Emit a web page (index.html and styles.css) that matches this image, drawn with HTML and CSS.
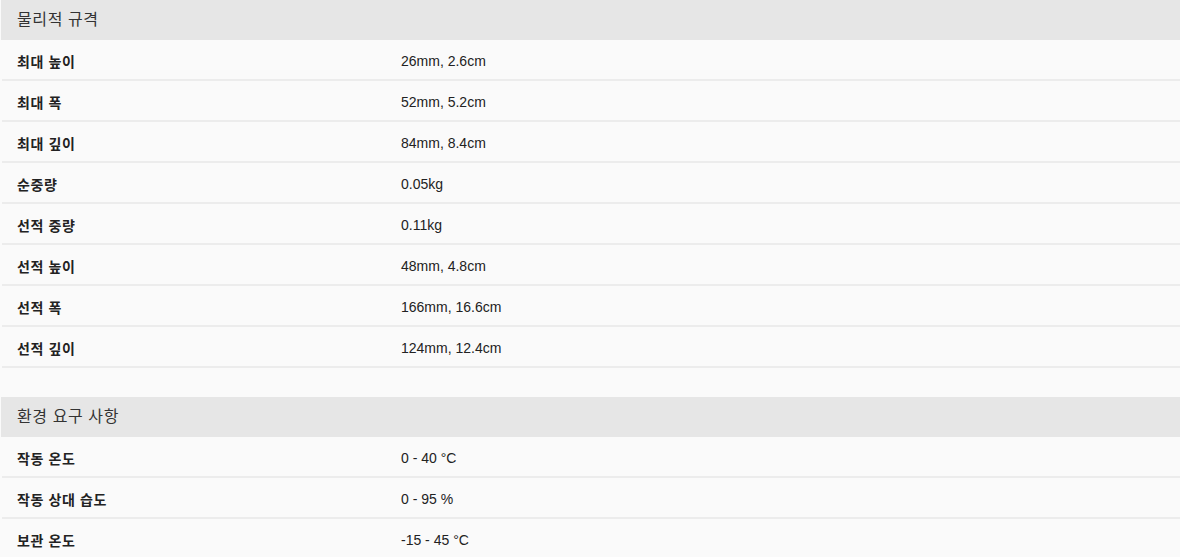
FILE: index.html
```html
<!DOCTYPE html>
<html lang="ko">
<head>
<meta charset="utf-8">
<link rel="stylesheet" href="styles.css">
</head>
<body>
<section class="spec">
  <h2 class="spec-title">물리적 규격</h2>
  <div class="spec-row"><div class="spec-label">최대 높이</div><div class="spec-value">26mm, 2.6cm</div></div>
  <div class="spec-row"><div class="spec-label">최대 폭</div><div class="spec-value">52mm, 5.2cm</div></div>
  <div class="spec-row"><div class="spec-label">최대 깊이</div><div class="spec-value">84mm, 8.4cm</div></div>
  <div class="spec-row"><div class="spec-label">순중량</div><div class="spec-value">0.05kg</div></div>
  <div class="spec-row"><div class="spec-label">선적 중량</div><div class="spec-value">0.11kg</div></div>
  <div class="spec-row"><div class="spec-label">선적 높이</div><div class="spec-value">48mm, 4.8cm</div></div>
  <div class="spec-row"><div class="spec-label">선적 폭</div><div class="spec-value">166mm, 16.6cm</div></div>
  <div class="spec-row"><div class="spec-label">선적 깊이</div><div class="spec-value">124mm, 12.4cm</div></div>
</section>
<section class="spec">
  <h2 class="spec-title">환경 요구 사항</h2>
  <div class="spec-row"><div class="spec-label">작동 온도</div><div class="spec-value">0 - 40 °C</div></div>
  <div class="spec-row"><div class="spec-label">작동 상대 습도</div><div class="spec-value">0 - 95 %</div></div>
  <div class="spec-row"><div class="spec-label">보관 온도</div><div class="spec-value">-15 - 45 °C</div></div>
</section>
</body>
</html>
```
FILE: styles.css
```css
html, body {
  margin: 0;
  padding: 0;
  background: #fafafa;
  color: #222;
  font-family: "Liberation Sans", "Noto Sans CJK KR", Arial, sans-serif;
}
.spec {
  margin-bottom: 29px;
}
.spec-title {
  margin: 0 0 0 1px;
  height: 38px;
  line-height: 38px;
  padding: 1px 0 1px 16px;
  background: #e6e6e6;
  font-size: 16px;
  font-weight: normal;
  color: #333;
  letter-spacing: 0.6px;
}
.spec-row {
  margin-left: 2px;
  height: 37px;
  padding: 2px 0 0 15px;
  border-bottom: 2px solid #ececec;
  display: grid;
  grid-template-columns: 384px 1fr;
  align-items: center;
  font-size: 14px;
}
.spec-label {
  font-weight: bold;
  color: #222;
  letter-spacing: 0.6px;
}
.spec-value {
  color: #222;
}
```
